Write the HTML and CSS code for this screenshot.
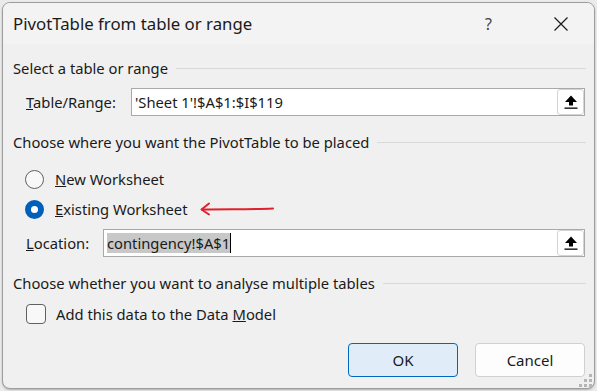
FILE: index.html
```html
<!DOCTYPE html>
<html>
<head>
<meta charset="utf-8">
<link rel="stylesheet" href="styles.css">
</head>
<body>
<div class="dialog">
  <div class="titlebar">
    <span class="title">PivotTable from table or range</span>
    <span class="help">?</span>
    <svg class="close" width="16" height="14" viewBox="0 0 16 14"><path d="M1.5 0.5 L14.5 13.5 M14.5 0.5 L1.5 13.5" stroke="#1a1a1a" stroke-width="1.2" fill="none"/></svg>
  </div>
  <div class="content">
    <div class="group-head g1"><span>Select a table or range</span><i class="rule"></i></div>
    <div class="field-row r-table">
      <label class="lbl lbl-table"><u>T</u>able/Range:</label>
      <div class="input">
        <span class="value">'Sheet 1'!$A$1:$I$119</span>
        <button class="pick"><svg width="16" height="16" viewBox="0 0 16 16"><path d="M8 1.5 L14 8 L10 8 L10 11.5 L6 11.5 L6 8 L2 8 Z" fill="#000"/><rect x="1.5" y="13.5" width="13" height="1.3" fill="#000"/></svg></button>
      </div>
    </div>
    <div class="group-head g2"><span>Choose where you want the PivotTable to be placed</span><i class="rule"></i></div>
    <div class="opt r-new">
      <span class="radio"></span>
      <span class="opt-text"><u>N</u>ew Worksheet</span>
    </div>
    <div class="opt r-exist">
      <span class="radio checked"></span>
      <span class="opt-text"><u>E</u>xisting Worksheet</span>
      <svg class="annot" width="76" height="14" viewBox="0 0 76 14"><path d="M74 6.5 C55 7.5 30 7 3 7.5" stroke="#e0202e" stroke-width="2" fill="none" stroke-linecap="round"/><path d="M10 1.5 L2.5 7.5 L10 12.5" stroke="#e0202e" stroke-width="2" fill="none" stroke-linecap="round" stroke-linejoin="round"/></svg>
    </div>
    <div class="field-row r-loc">
      <label class="lbl lbl-loc"><u>L</u>ocation:</label>
      <div class="input">
        <span class="value"><span class="sel">contingency!$A$1</span><span class="caret"></span></span>
        <button class="pick"><svg width="16" height="16" viewBox="0 0 16 16"><path d="M8 1.5 L14 8 L10 8 L10 11.5 L6 11.5 L6 8 L2 8 Z" fill="#000"/><rect x="1.5" y="13.5" width="13" height="1.3" fill="#000"/></svg></button>
      </div>
    </div>
    <div class="group-head g3"><span>Choose whether you want to analyse multiple tables</span><i class="rule"></i></div>
    <div class="opt r-check">
      <span class="check"></span>
      <span class="opt-text">Add this data to the Data <u>M</u>odel</span>
    </div>
    <div class="footer">
      <button class="btn primary">OK</button>
      <button class="btn">Cancel</button>
    </div>
  </div>
  <div class="grip">
    <i class="d1"></i>
    <i class="d2"></i><i class="d3"></i>
    <i class="d4"></i><i class="d5"></i><i class="d6"></i>
  </div>
</div>
</body>
</html>
```
FILE: styles.css
```css
html, body {
  margin: 0;
  padding: 0;
}
body {
  width: 597px;
  height: 391px;
  background: #ebebeb;
  font-family: "Noto Sans", "Open Sans", sans-serif;
  color: #1a1a1a;
  overflow: hidden;
}
.dialog {
  position: relative;
  box-sizing: border-box;
  margin: 2px 0 0 2px;
  width: 593px;
  height: 387px;
  border: 1px solid #9d9d9d;
  border-radius: 8px;
  background: #f0f0f0;
  overflow: hidden;
  box-shadow: 0 1px 2px rgba(0,0,0,0.25);
}
.titlebar {
  height: 41px;
  background: #f3f3f3;
  display: flex;
  align-items: center;
  padding-left: 10px;
}
.title {
  font-size: 16.8px;
  flex: 1;
}
.help {
  font-size: 16px;
  color: #444;
  margin-right: 61px;
}
.close {
  margin-right: 25px;
}
.content {
  padding: 0 8px 0 10px;
  font-size: 14.75px;
}
.group-head {
  height: 20px;
  display: flex;
  align-items: center;
  white-space: nowrap;
}
.group-head .rule {
  flex: 1;
  height: 1px;
  background: #d9d9d9;
  margin-left: 8px;
}
.g1 { margin-top: 14px; }
.g2 { margin-top: 16px; }
.g3 { margin-top: 16px; }
.field-row {
  display: flex;
  align-items: center;
  height: 28px;
  padding-left: 13px;
  margin-right: 1px;
}
.r-table { margin-top: 10px; }
.r-loc { margin-top: 10px; }
.lbl-table { width: 105px; }
.lbl-loc { width: 77px; }
.input {
  flex: 1;
  box-sizing: border-box;
  height: 28px;
  border: 1px solid #a9a9a9;
  background: #fff;
  display: flex;
  align-items: center;
  padding-left: 3px;
}
.value {
  flex: 1;
  display: flex;
  align-items: center;
  white-space: nowrap;
}
.sel {
  background: #c8c8c8;
  line-height: 20px;
}
.caret {
  display: inline-block;
  width: 1px;
  height: 20px;
  background: #000;
}
.pick {
  box-sizing: border-box;
  width: 27px;
  height: 26px;
  margin-right: 0;
  padding: 0;
  border: 1px solid #d4d4d4;
  border-radius: 3px;
  background: #fff;
  display: flex;
  align-items: center;
  justify-content: center;
}
.opt {
  display: flex;
  align-items: center;
  height: 20px;
  padding-left: 12px;
}
.r-new { margin-top: 17px; }
.r-exist { margin-top: 10px; }
.r-check { margin-top: 11px; }
.radio {
  box-sizing: border-box;
  width: 19px;
  height: 19px;
  border-radius: 50%;
  border: 1px solid #606060;
  background: #f8f8f8;
  margin-right: 11px;
}
.radio.checked {
  border: 6px solid #005fb8;
  background: #fff;
}
.check {
  box-sizing: border-box;
  width: 20px;
  height: 20px;
  border-radius: 4px;
  border: 1px solid #606060;
  background: #f8f8f8;
  margin-left: 1px;
  margin-right: 10px;
}
.annot {
  margin-left: 11px;
}
.footer {
  display: flex;
  justify-content: flex-end;
  gap: 17px;
  margin-top: 19px;
  padding-right: 1px;
}
.btn {
  box-sizing: border-box;
  width: 110px;
  height: 34px;
  font-family: inherit;
  font-size: 15px;
  color: #1a1a1a;
  background: #fdfdfd;
  border: 1px solid #d0d0d0;
  border-radius: 4px;
  padding: 0;
}
.btn.primary {
  background: #e0ecf8;
  border-color: #0067c0;
}
.grip {
  position: absolute;
  right: 2px;
  bottom: 1px;
  display: grid;
  grid-template-columns: repeat(3, 3px);
  grid-template-rows: repeat(3, 3px);
  gap: 2px;
}
.grip i {
  background: #b5b5b5;
}
.grip .d1 { grid-area: 1 / 3; }
.grip .d2 { grid-area: 2 / 2; }
.grip .d3 { grid-area: 2 / 3; }
.grip .d4 { grid-area: 3 / 1; }
.grip .d5 { grid-area: 3 / 2; }
.grip .d6 { grid-area: 3 / 3; }
```
